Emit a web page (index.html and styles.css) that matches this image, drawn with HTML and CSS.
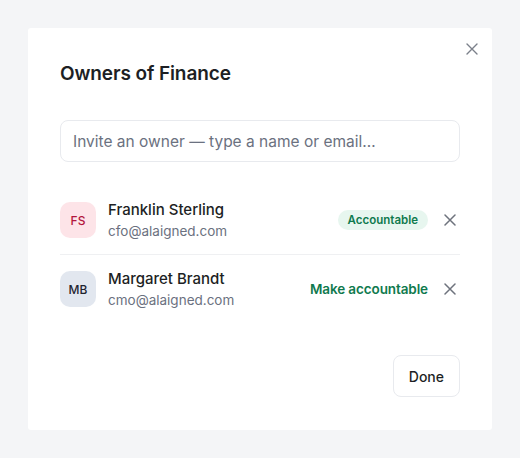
FILE: index.html
```html
<!DOCTYPE html>
<html lang="en">
<head>
  <meta charset="UTF-8">
  <meta name="viewport" content="width=device-width, initial-scale=1.0">
  <title>Owners of Finance</title>
  <link rel="stylesheet" href="styles.css">
</head>
<body>
  <div class="modal">
    <button class="close-btn" aria-label="Close">
      <svg width="12" height="12" viewBox="0 0 12 12"><path d="M1 1L11 11M11 1L1 11" stroke="currentColor" stroke-width="1.4" stroke-linecap="round"/></svg>
    </button>

    <h2 class="modal-title">Owners of Finance</h2>

    <input class="invite-input" type="text" placeholder="Invite an owner — type a name or email…">

    <ul class="owner-list">
      <li class="owner-row">
        <div class="avatar pink">FS</div>
        <div class="owner-info">
          <div class="owner-name">Franklin Sterling</div>
          <div class="owner-email">cfo@alaigned.com</div>
        </div>
        <span class="badge">Accountable</span>
        <button class="remove-btn" aria-label="Remove">
          <svg width="12" height="12" viewBox="0 0 12 12"><path d="M1 1L11 11M11 1L1 11" stroke="currentColor" stroke-width="1.5" stroke-linecap="round"/></svg>
        </button>
      </li>
      <li class="owner-row">
        <div class="avatar slate">MB</div>
        <div class="owner-info">
          <div class="owner-name">Margaret Brandt</div>
          <div class="owner-email">cmo@alaigned.com</div>
        </div>
        <button class="make-btn">Make accountable</button>
        <button class="remove-btn" aria-label="Remove">
          <svg width="12" height="12" viewBox="0 0 12 12"><path d="M1 1L11 11M11 1L1 11" stroke="currentColor" stroke-width="1.5" stroke-linecap="round"/></svg>
        </button>
      </li>
    </ul>

    <div class="modal-footer">
      <button class="done-btn">Done</button>
    </div>
  </div>
</body>
</html>
```

FILE: styles.css
```css
* {
  box-sizing: border-box;
}

body {
  margin: 0;
  padding: 28px;
  background-color: #f4f5f7;
  font-family: Inter, "Noto Sans", sans-serif;
  color: #1d1f24;
}

.modal {
  position: relative;
  width: 464px;
  height: 402px;
  padding: 32px;
  background-color: #fff;
  border-radius: 3px;
}

.close-btn {
  position: absolute;
  top: 9px;
  right: 8px;
  width: 24px;
  height: 24px;
  display: flex;
  align-items: center;
  justify-content: center;
  padding: 0;
  border: none;
  background: none;
  color: #7b808a;
  cursor: pointer;
}

.modal-title {
  margin: 0;
  font-size: 19px;
  line-height: 28px;
  font-weight: 600;
  letter-spacing: -0.1px;
}

.invite-input {
  display: block;
  width: 100%;
  height: 42px;
  margin-top: 32px;
  padding: 0 12px;
  border: 1px solid #e8eaee;
  border-radius: 8px;
  font-family: inherit;
  font-size: 15.5px;
  color: #1d1f24;
  outline: none;
}

.invite-input::placeholder {
  color: #6b7180;
}

.owner-list {
  list-style: none;
  margin: 24px 0 0;
  padding: 0;
}

.owner-row {
  display: flex;
  align-items: center;
  gap: 12px;
  padding: 15px 0;
}

.owner-row + .owner-row {
  border-top: 1px solid #eff0f2;
}

.avatar {
  width: 36px;
  height: 36px;
  flex-shrink: 0;
  display: flex;
  align-items: center;
  justify-content: center;
  border-radius: 10px;
  font-size: 12px;
  font-weight: 500;
}

.avatar.pink {
  background-color: #fde4e8;
  color: #b3153d;
}

.avatar.slate {
  background-color: #e2e7ef;
  color: #1f2430;
}

.owner-info {
  flex: 1;
  min-width: 0;
}

.owner-name {
  font-size: 15px;
  line-height: 18px;
  font-weight: 500;
  color: #1d1f24;
}

.owner-email {
  margin-top: 4px;
  font-size: 13.5px;
  line-height: 16px;
  color: #6b7180;
}

.badge {
  padding: 0 10px;
  height: 20px;
  line-height: 20px;
  border-radius: 10px;
  background-color: #e7f6ef;
  color: #0f7a4e;
  font-size: 11.5px;
  font-weight: 600;
}

.make-btn {
  padding: 0;
  border: none;
  background: none;
  font-family: inherit;
  font-size: 13.5px;
  font-weight: 600;
  letter-spacing: -0.1px;
  color: #0f7a4e;
  cursor: pointer;
}

.remove-btn {
  width: 20px;
  height: 20px;
  display: flex;
  align-items: center;
  justify-content: center;
  padding: 0;
  border: none;
  background: none;
  color: #6e737d;
  cursor: pointer;
}

.modal-footer {
  display: flex;
  justify-content: flex-end;
  margin-top: 32px;
}

.done-btn {
  height: 42px;
  padding: 0 15px;
  border: 1px solid #e8eaee;
  border-radius: 8px;
  background-color: #fff;
  font-family: inherit;
  font-size: 14px;
  font-weight: 500;
  color: #1d1f24;
  cursor: pointer;
}
```
